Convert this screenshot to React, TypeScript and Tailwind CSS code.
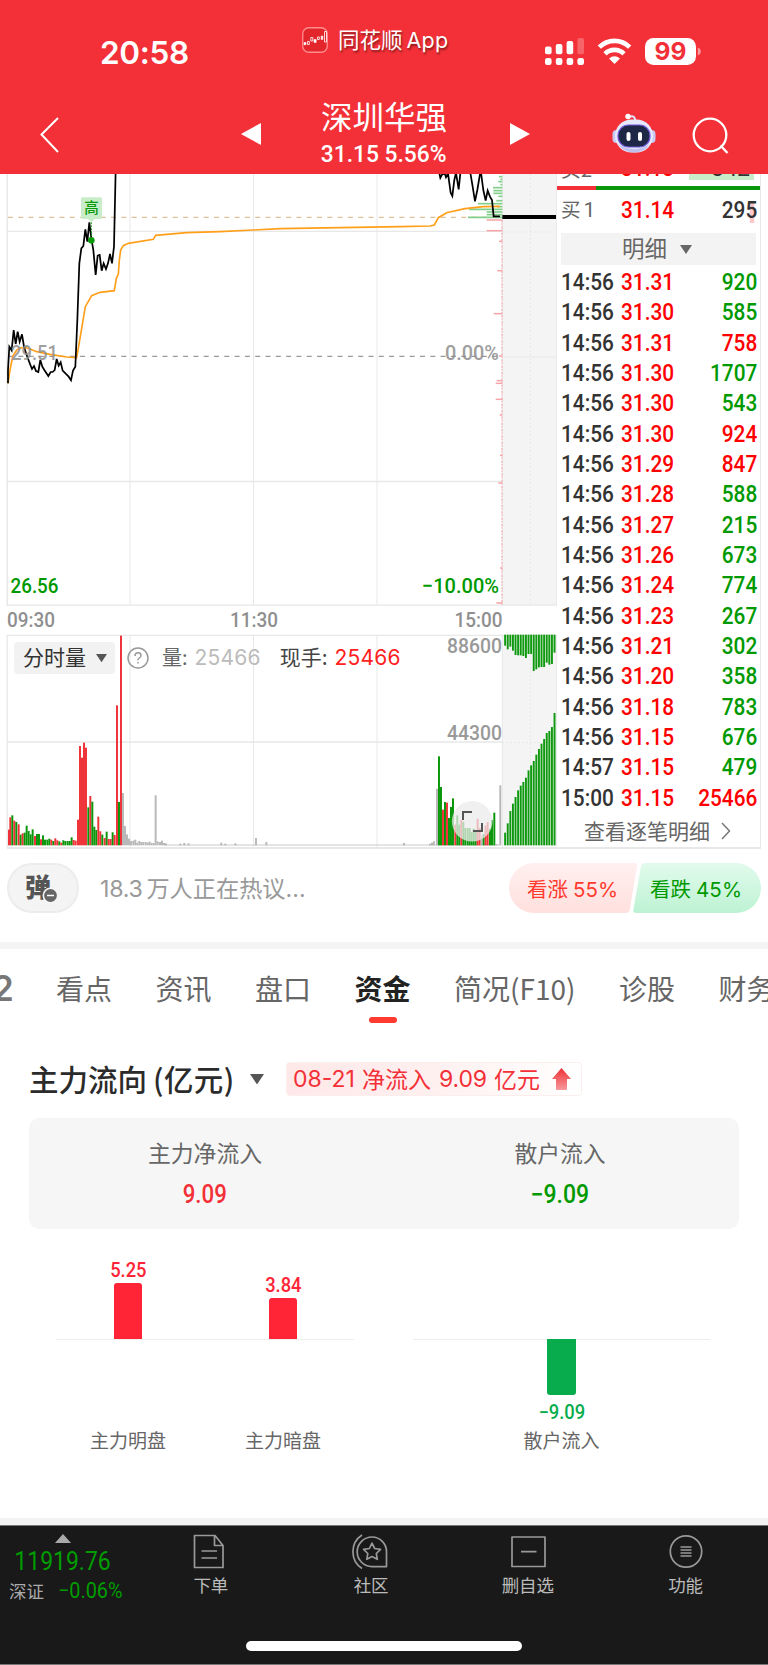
import type { ReactNode } from "react";

type Dir = "up" | "down";
type Bar = [x: number, h: number, color: "r" | "g" | "n"];

const TICKS: [time: string, price: string, vol: string, dir: Dir][] = [
  ["14:56", "31.31", "920", "down"],
  ["14:56", "31.30", "585", "down"],
  ["14:56", "31.31", "758", "up"],
  ["14:56", "31.30", "1707", "down"],
  ["14:56", "31.30", "543", "down"],
  ["14:56", "31.30", "924", "up"],
  ["14:56", "31.29", "847", "up"],
  ["14:56", "31.28", "588", "down"],
  ["14:56", "31.27", "215", "down"],
  ["14:56", "31.26", "673", "down"],
  ["14:56", "31.24", "774", "down"],
  ["14:56", "31.23", "267", "down"],
  ["14:56", "31.21", "302", "down"],
  ["14:56", "31.20", "358", "down"],
  ["14:56", "31.18", "783", "down"],
  ["14:56", "31.15", "676", "down"],
  ["14:57", "31.15", "479", "down"],
  ["15:00", "31.15", "25466", "up"],
];

// Chart data is stored at 3x, the svg groups scale it back down.
const PRICE_OPEN =
  "24,640 24,600 28,530 35,541 41,480 47,522 53,485 59,515 66,493 72,530 78,550 90,582 96,597 102,588 108,603 115,606 121,570 127,590 133,600 145,618 152,606 158,606 164,600 170,567 176,587 182,577 188,602 194,608 206,620 213,631 219,602 226,590 232,450 238,280 244,235 250,228 256,178 262,215 268,157 274,205 280,240 287,315 293,257 299,255 305,302 311,280 318,297 324,280 330,252 336,280 342,230 347,0";
const PRICE_CLOSE =
  "1316,0 1321,24 1326,14 1334,10 1338,22 1344,10 1352,68 1357,78 1363,30 1368,8 1376,58 1382,0 1405,-10 1412,14 1418,50 1425,94 1432,60 1442,0 1450,60 1457,92 1463,62 1470,80 1476,90 1481,139 1500,139";
const AVERAGE =
  "24,640 30,600 38,560 50,540 60,534 75,532 90,537 110,545 150,553 200,561 230,563 240,505 256,410 275,377 300,367 343,362 349,325 355,312 358,270 362,240 370,227 385,220 460,208 467,196 500,193 560,188 660,185 760,180 840,176 1200,170 1290,168 1303,165 1315,143 1340,128 1395,116 1450,110 1500,109";

const ASKS = [[20, 10], [28, 6], [35, 12], [44, 6], [53, 28], [62, 27], [70, 27], [79, 12], [92, 18], [101, 73], [110, 17], [118, 100], [126, 47], [134, 47], [142, 103]];
const BIDS = [[150, 47], [182, 47], [214, 10], [302, 15], [431, 26], [558, 10], [632, 17], [640, 20], [688, 20], [735, 8], [856, 7], [939, 12], [1194, 7], [1299, 18]];

const VOLUME: Bar[] = [
  [27, 47, "r"], [31, 84, "r"], [37, 90, "g"], [43, 74, "r"], [49, 70, "g"], [56, 63, "r"], [62, 32, "g"], [68, 36, "r"],
  [74, 38, "g"], [80, 59, "g"], [86, 43, "g"], [92, 33, "g"], [98, 48, "g"], [105, 28, "r"], [111, 34, "g"], [117, 34, "g"],
  [123, 18, "r"], [129, 30, "g"], [135, 17, "g"], [142, 17, "g"], [148, 20, "g"], [154, 17, "r"], [160, 13, "g"], [166, 21, "r"],
  [172, 15, "r"], [178, 12, "g"], [184, 8, "r"], [190, 15, "g"], [196, 13, "g"], [203, 13, "g"], [209, 13, "g"], [215, 24, "g"],
  [221, 16, "r"], [227, 14, "r"], [234, 77, "r"], [240, 298, "r"], [246, 263, "r"], [252, 308, "r"], [258, 293, "r"], [265, 114, "g"],
  [271, 148, "r"], [277, 131, "g"], [283, 56, "g"], [289, 46, "g"], [295, 86, "r"], [301, 42, "r"], [307, 32, "g"], [314, 22, "r"],
  [320, 41, "g"], [326, 19, "r"], [332, 19, "r"], [338, 39, "g"], [344, 31, "r"], [351, 420, "r"], [357, 130, "g"], [363, 629, "r"],
  [369, 157, "n"], [375, 58, "n"], [381, 33, "n"], [387, 20, "n"], [393, 13, "n"], [400, 14, "n"], [406, 17, "n"], [412, 8, "n"],
  [418, 13, "n"], [424, 10, "n"], [430, 10, "n"], [437, 10, "n"], [443, 9, "n"], [449, 11, "n"], [455, 7, "n"], [461, 7, "n"],
  [467, 150, "n"], [473, 12, "n"], [480, 10, "n"], [486, 14, "n"], [492, 7, "n"], [498, 6, "n"], [541, 5, "n"], [553, 7, "n"],
  [566, 6, "n"], [664, 8, "n"], [676, 5, "n"], [706, 6, "n"], [768, 22, "n"], [799, 10, "n"], [1212, 7, "n"], [1290, 5, "n"],
  [1296, 8, "n"], [1302, 12, "n"], [1311, 170, "n"], [1317, 267, "g"], [1323, 175, "g"], [1329, 107, "r"], [1335, 130, "g"],
  [1341, 128, "r"], [1347, 82, "g"], [1353, 115, "g"], [1359, 141, "g"], [1366, 62, "r"], [1372, 90, "g"], [1378, 62, "g"],
  [1384, 76, "r"], [1390, 70, "g"], [1396, 52, "g"], [1403, 52, "g"], [1409, 52, "g"], [1415, 40, "g"], [1421, 50, "g"],
  [1427, 46, "g"], [1433, 80, "r"], [1439, 52, "r"], [1445, 30, "n"], [1451, 34, "g"], [1457, 60, "r"], [1463, 70, "r"],
  [1470, 50, "g"], [1476, 76, "g"], [1483, 98, "g"], [1489, 4, "n"], [1501, 180, "n"],
];
const AUCTION_TOP = [33, 44, 36, 48, 61, 62, 62, 64, 70, 58, 58, 109, 104, 98, 97, 97, 84, 90, 88, 54];
const AUCTION_BOTTOM = [38, 66, 103, 125, 145, 165, 179, 190, 203, 225, 240, 253, 272, 289, 305, 319, 337, 343, 355, 397];

const BAR_FILL = { r: "#ee3237", g: "#0a960a", n: "#b8b8b8" };
const GRID_X = [130, 253.5, 377];

function Triangle({ className = "" }: { className?: string }) {
  return (
    <svg viewBox="0 0 12 9" className={className} fill="currentColor">
      <path d="M0 0h12L6 9z" />
    </svg>
  );
}

/** Chart label stretched to an exact width. */
function Label({ x, y, w, fill, children }: { x: number; y: number; w: number; fill: string; children: ReactNode }) {
  return (
    <text x={x} y={y} textLength={w} lengthAdjust="spacingAndGlyphs" fill={fill} fontSize="21" fontWeight="500" fontFamily="Roboto, sans-serif">
      {children}
    </text>
  );
}

function StatusBar() {
  return (
    <div className="flex h-[92px] items-start text-white">
      <div className="w-[302px] pt-[32px] pl-[100px] font-['Inter'] text-[31.500px] leading-[42px] font-semibold tracking-[-0.3px]">20:58</div>
      <div className="flex w-[243px] items-start gap-[10px] pt-[27px]">
        <svg width="26" height="26" viewBox="0 0 26 26" fill="none" stroke="#fff">
          <rect x="0.75" y="0.75" width="24.5" height="24.5" rx="6" fill="#e3262c" stroke="#ff8d90" strokeWidth="1.3" />
          <path d="M5.500 14.500h1.800v3H5.500zM8.800 10.500h2v3.500h-2zM15.500 10h1.800v2.500h-1.800zM22.500 4.500h2v10.500h-2z" strokeWidth="0.8" />
          <path d="M2 15.500h2v2.200H2zM12 12.500h2.200v3H12zM19.200 9h1.600v3.500h-1.600z" fill="#fff" strokeWidth="0.5" />
        </svg>
        <span className="-mt-[1px] text-[21.500px] leading-[26px] whitespace-nowrap [text-shadow:1px_2px_2px_rgba(0,0,0,0.45)]">
          同花顺<span className="ml-1 font-['Inter'] tracking-[0.2px]">App</span>
        </span>
      </div>
      <svg width="157" height="28" viewBox="0 0 157 28" className="mt-[38px]" fill="#fff">
        {[8.5, 6, 3, 0].map((top, i) => (
          <g key={top}>
            <rect x={i * 10.8} y={top} width="6.6" height={16.300 - top} rx="2" opacity={i === 3 ? 0.25 : 1} />
            <rect x={i * 10.8} y="20" width="6.600" height="7" rx="2.200" />
          </g>
        ))}
        <g fill="none" stroke="#fff" strokeWidth="4.600">
          <path d="M54.300 9.200a21.500 21.500 0 0 1 30.400 0" />
          <path d="M60 15.800a13.500 13.500 0 0 1 19 0" />
        </g>
        <path d="M64 20.500q5.500-4.600 11 0l-5.500 5.600z" />
        <rect x="100" width="51" height="27" rx="8.500" />
        <path d="M152.800 9.500q3 1.200 3 4t-3 4z" opacity="0.5" />
        <text x="125.500" y="22" textAnchor="middle" fill="#f33037" fontSize="24.500" fontWeight="700" fontFamily="Inter">99</text>
      </svg>
    </div>
  );
}

function Robot() {
  return (
    <svg width="44" height="42" viewBox="0 0 44 42" className="-mt-[2px]">
      <path d="M17 5q6-3 6.500 5" fill="none" stroke="#dfe4ff" strokeWidth="2" />
      <circle cx="16" cy="4.500" r="2.700" fill="#fff" />
      <rect x="0.500" y="18" width="8" height="13" rx="4" fill="#c9caf3" />
      <rect x="35.500" y="18" width="8" height="13" rx="4" fill="#c9caf3" />
      <rect x="3" y="7.500" width="38" height="33" rx="16.500" fill="#e6e8fb" />
      <path d="M6 32q6 8.500 16 8.500T38 32q-7 5-16 5T6 32z" fill="#bfc0ec" />
      <rect x="6" y="13" width="32" height="22" rx="10.500" fill="#1f2747" stroke="#6f58d8" strokeWidth="1.200" />
      <rect x="14.500" y="20" width="4" height="9" rx="2" fill="#fff" />
      <rect x="26" y="20" width="4" height="9" rx="2" fill="#fff" />
    </svg>
  );
}

function Header() {
  return (
    <header className="h-[174px] bg-[#f33037] text-white">
      <StatusBar />
      <div className="flex h-[82px] items-start">
        <div className="w-[241px] pt-[24px] pl-[39px]">
          <svg width="22" height="38" viewBox="0 0 22 38" fill="none" stroke="#fff" strokeWidth="2">
            <path d="M19 2L2.500 18.500 19 36" />
          </svg>
        </div>
        <svg width="20" height="22" viewBox="0 0 20 22" className="mt-[31px]" fill="#fff"><path d="M20 0v22L0 11z" /></svg>
        <div className="flex w-[249px] flex-col items-center pt-[5px] pr-[3px]">
          <span className="text-[31.500px] leading-[36px]">深圳华强</span>
          <span className="mt-[6px] origin-center scale-x-[0.93] font-['Roboto'] text-[24.500px] leading-[30px] font-medium whitespace-nowrap">31.15 5.56%</span>
        </div>
        <svg width="20" height="22" viewBox="0 0 20 22" className="mt-[31px]" fill="#fff"><path d="M0 0v22l20-11z" /></svg>
        <div className="flex w-[238px] items-center gap-[36px] pt-[21px] pl-[82px]">
          <Robot />
          <svg width="38" height="38" viewBox="0 0 38 38" className="mt-[4px]" fill="none" stroke="#fff" strokeWidth="2.300">
            <circle cx="18" cy="18" r="16.300" />
            <path d="M28.500 28.500L35.500 36" />
          </svg>
        </div>
      </div>
    </header>
  );
}

function PriceChart() {
  return (
    <svg width="557" height="432" viewBox="0 174 557 432" className="block">
      <rect x="502" y="174" width="55" height="431" fill="#f4f4f4" />
      <g stroke="#e8e8e8" strokeWidth="1">
        <path d="M7.200 174V606" strokeWidth="1.500" />
        {GRID_X.map((x) => (
          <path key={x} d={`M${x} 174V605`} />
        ))}
        <path d="M7 231.300H502M7 481.500H502M7 605.200H557" strokeWidth="1.300" />
        <path d="M502 357H556M502.300 174V606M556.700 174V606" />
        <path d="M530.500 174V605M502 232H556" strokeDasharray="2 2" />
      </g>
      <path d="M8 217.300H502" stroke="#dcc09a" strokeDasharray="5 5.300" strokeWidth="1.200" />
      <path d="M8 356.300H502" stroke="#999" strokeDasharray="5 5.300" strokeWidth="1.200" />
      <g transform="translate(0 170) scale(0.33333)" fill="none">
        <g stroke="#82cf8a" strokeWidth="5">
          {ASKS.map(([y, w]) => (
            <path key={y} d={`M1507 ${y}h${-w}`} />
          ))}
        </g>
        <g stroke="#f7a3a8" strokeWidth="4.500">
          <path d="M1506 150V1305" strokeWidth="3" strokeDasharray="7 3 4 5" />
          {BIDS.map(([y, w]) => (
            <path key={y} d={`M1507 ${y}h${-w}`} />
          ))}
        </g>
        <polyline points={AVERAGE} stroke="#ff9f1a" strokeWidth="5" />
        <polyline points={PRICE_OPEN} stroke="#000" strokeWidth="5.200" />
        <polyline points={PRICE_CLOSE} stroke="#000" strokeWidth="5.200" />
        <path d="M1507 141H1668" stroke="#000" strokeWidth="12" />
        <path d="M247 82h55q4 0 4 4v57q0 4-4 4h-18l-10 10-10-10h-17q-4 0-4-4V86q0-4 4-4z" fill="#c9edc9" />
        <path d="M274 157V205" stroke="#0a9a0a" strokeWidth="3" strokeDasharray="5 4" />
        <circle cx="274" cy="211" r="10" fill="#0a9a0a" />
      </g>
      <text x="91.500" y="212.500" textAnchor="middle" fill="#0a9a0a" fontSize="14.500" fontWeight="500">高</text>
      <g opacity="0.85">
        <Label x={11} y={360} w={47} fill="#8f8f8f">29.51</Label>
        <Label x={445} y={360} w={54} fill="#8f8f8f">0.00%</Label>
      </g>
      <Label x={10.500} y={592.700} w={48} fill="#009900">26.56</Label>
      <Label x={422} y={592.700} w={77} fill="#009900">−10.00%</Label>
    </svg>
  );
}

function VolumeChart() {
  return (
    <div className="relative">
      <svg width="557" height="215" viewBox="0 634 557 215" className="block">
        <rect x="502" y="635" width="55" height="211" fill="#f4f4f4" />
        <g stroke="#e8e8e8" strokeWidth="1">
          <path d="M7.200 635V848M7 635.300H557M7 742H502" strokeWidth="1.300" />
          <path d="M7 848H557" strokeWidth="1.800" />
          {GRID_X.map((x) => (
            <path key={x} d={`M${x} 635V847`} />
          ))}
          <path d="M502.300 635V847M556.700 635V848" />
          <path d="M530.500 635V847M502 742.500H556" strokeDasharray="2 2" />
        </g>
        <path d="M164 845H500" stroke="#c4c4c4" strokeWidth="0.900" />
        <g transform="translate(0 560) scale(0.33333)">
          {VOLUME.map(([x, h, c]) => (
            <rect key={x} x={x - 3} y={856 - h} width="5.900" height={h} fill={BAR_FILL[c]} />
          ))}
          {AUCTION_TOP.map((h, i) => (
            <rect key={i} x={1512.500 + i * 7.800} y="224" width="5.800" height={h} fill="#0f990f" />
          ))}
          {AUCTION_BOTTOM.map((h, i) => (
            <rect key={i} x={1512.500 + i * 7.800} y={856 - h} width="5.800" height={h} fill="#0f990f" />
          ))}
        </g>
        <Label x={447} y={652.700} w={55} fill="#999">88600</Label>
        <Label x={447} y={740} w={55} fill="#999">44300</Label>
        <circle cx="472.200" cy="821.300" r="20.300" fill="#ebebeb" fillOpacity="0.75" />
        <path d="M463 820v-8h9M482 823v8h-9" fill="none" stroke="#555" strokeWidth="2" />
      </svg>
      <div className="absolute top-[8px] left-[14px] flex h-8 items-center text-[21px] whitespace-nowrap">
        <div className="flex h-8 w-[101px] items-center gap-[10px] rounded bg-[#f2f2f2] pl-[9px] text-[#333]">
          <span className="-mt-[2px]">分时量</span>
          <Triangle className="w-[11px] text-[#555]" />
        </div>
        <svg width="22" height="22" viewBox="0 0 22 22" className="ml-[12px]" fill="none" stroke="#999" strokeWidth="1.500">
          <circle cx="11" cy="11" r="10" />
          <path d="M8 9q0-3.200 3-3.200t3 2.700q0 1.300-1.700 2.500T11 13.500M11 15v1.600" />
        </svg>
        <span className="-mt-[2px] ml-[13px] text-[20px] text-[#666]">量:</span>
        <span className="ml-[7px] font-['Inter'] text-[21px] tracking-[0.2px] text-[#bbb]">25466</span>
        <span className="-mt-[2px] ml-[19px] text-[#444]">现手:</span>
        <span className="ml-[7px] font-['Inter'] text-[21px] tracking-[0.2px] text-[#ff2020]">25466</span>
      </div>
    </div>
  );
}

function TickPanel() {
  const num = "font-['Roboto'] text-[23px] font-medium scale-x-[0.905]";
  return (
    <div className="flex h-[675px] w-[204px] flex-col overflow-hidden border-r border-b-2 border-[#e8e8e8] font-normal">
      <div className="flex h-[12px] shrink-0 items-end overflow-hidden">
        <div className="flex h-[30px] w-full shrink-0 items-center pb-[5px] pl-1 text-[20px] leading-[20px] text-[#666]">
          <span className="w-[60px]">买2</span>
          <span className={`${num} origin-left text-[#f00]`}>31.13</span>
          <span className="mr-[6px] ml-auto h-[22px] w-[65px] bg-[#c9edc9] pr-1 text-right font-['Roboto'] text-[23px] leading-[22px] text-[#333]">342</span>
        </div>
      </div>
      <div className="flex h-[4px] shrink-0">
        <div className="w-[39px] bg-[#f33037]" />
        <div className="grow bg-[#0a960a]" />
      </div>
      <div className="flex h-[43px] shrink-0 items-center pr-[3px] pl-[4px]">
        <span className="-mt-[2px] w-[60px] text-[19.500px] text-[#666]">买<span className="ml-[3px] font-['Roboto'] text-[21px]">1</span></span>
        <span className={`${num} origin-left text-[#f00]`}>31.14</span>
        <span className={`${num} ml-auto origin-right bg-[linear-gradient(#ffc9cc,#ffc9cc)] bg-[length:5px_22px] bg-[position:right_3px_center] bg-no-repeat text-[#333]`}>295</span>
      </div>
      <div className="mr-[4px] ml-[4px] flex h-[32px] shrink-0 items-center justify-center gap-[13px] bg-[#f3f3f3] pr-[3px] text-[22.500px] text-[#666]">
        <span className="-mt-[2px]">明细</span>
        <Triangle className="w-[12px]" />
      </div>
      <div className="mt-[3px] flex shrink-0 flex-col">
        {TICKS.map(([time, price, vol, dir], i) => (
          <div key={i} className="flex h-[30.350px] items-center pr-[3px] pl-[4px]">
            <span className={`${num} w-[60px] origin-left text-[#333]`}>{time}</span>
            <span className={`${num} origin-left text-[#f00]`}>{price}</span>
            <span className={`${num} ml-auto origin-right ${dir === "up" ? "text-[#f00]" : "text-[#009900]"}`}>{vol}</span>
          </div>
        ))}
      </div>
      <div className="flex grow items-center gap-[11px] pl-[27px] text-[21px] whitespace-nowrap text-[#666]">
        查看逐笔明细
        <svg width="10" height="18" viewBox="0 0 10 18" fill="none" stroke="#777" strokeWidth="1.500">
          <path d="M1 1l7.500 8L1 17" />
        </svg>
      </div>
    </div>
  );
}

function Quote() {
  return (
    <section className="flex">
      <div className="w-[557px] shrink-0">
        <PriceChart />
        <svg width="557" height="28" viewBox="0 606 557 28" className="block">
          <Label x={7} y={627} w={48} fill="#8f8f8f">09:30</Label>
          <Label x={230} y={627} w={48} fill="#8f8f8f">11:30</Label>
          <Label x={454.500} y={627} w={48} fill="#8f8f8f">15:00</Label>
        </svg>
        <VolumeChart />
      </div>
      <TickPanel />
    </section>
  );
}

function Discussion() {
  return (
    <section className="flex h-[93px] items-start pt-[14px] pl-[7px]">
      <div className="relative h-[50px] w-[72px] rounded-full border-2 border-[#ececec] bg-[#f4f4f4]">
        <span className="absolute top-[6px] left-[16px] text-[26px] leading-[30px] font-black text-[#555]">弹</span>
        <svg width="17" height="17" viewBox="0 0 17 17" className="absolute top-[22px] left-[33px]">
          <circle cx="8.500" cy="8.500" r="7.200" fill="#666" stroke="#f4f4f4" strokeWidth="1.600" />
          <path d="M5 8.500h7" stroke="#fff" strokeWidth="1.500" />
        </svg>
      </div>
      <span className="ml-[21px] w-[409px] text-[23.200px] leading-[48px] text-[#999]">
        <span className="mr-1 font-['Inter'] tracking-[-0.3px]">18.3</span>万人正在热议<span className="font-['Inter']">...</span>
      </span>
      <div className="relative flex h-[50px] w-[252px] text-[20.500px] whitespace-nowrap">
        <svg width="252" height="50" viewBox="0 0 252 50" className="absolute inset-0">
          <defs>
            <linearGradient id="bull" x2="0" y2="1">
              <stop stopColor="#fff0ef" />
              <stop offset="1" stopColor="#ffe0de" />
            </linearGradient>
            <linearGradient id="bear" x2="0" y2="1">
              <stop stopColor="#e2fbec" />
              <stop offset="1" stopColor="#bdf2d3" />
            </linearGradient>
          </defs>
          <path d="M25 0H125.500q3 0 2.500 3L120.800 46.500q-.6 3.500-4 3.500H25a25 25 0 0 1 0-50z" fill="url(#bull)" />
          <path d="M227 0H136q-3.500 0-4 3.500L124.300 47q-.4 3 2.500 3H227a25 25 0 0 0 0-50z" fill="url(#bear)" />
        </svg>
        <span className="relative w-[122px] pl-[18px] leading-[50px] text-[#ff3b30]">看涨<span className="ml-[5px] font-['Inter'] tracking-[0.1px]">55%</span></span>
        <span className="relative pl-[19px] leading-[50px] text-[#009900]">看跌<span className="ml-[5px] font-['Inter'] tracking-[0.1px]">45%</span></span>
      </div>
    </section>
  );
}

function Tabs() {
  const rest = ["看点", "资讯", "盘口", "资金", "简况(F10)", "诊股", "财务"];
  return (
    <nav className="flex h-[90px] gap-[43.500px] overflow-hidden pt-[19px] text-[28px] leading-[40px] whitespace-nowrap text-[#666]">
      <span className="-ml-[8px] w-[20.500px] shrink-0 font-['Inter'] text-[35px] font-semibold text-[#777]">2</span>
      {rest.map((tab) =>
        tab === "资金" ? (
          <div key={tab} className="flex shrink-0 flex-col items-center font-bold text-[#222]">
            {tab}
            <div className="mt-[9px] h-[6px] w-[28px] rounded-sm bg-[#ff3b30]" />
          </div>
        ) : (
          <span key={tab} className="shrink-0">{tab}</span>
        ),
      )}
    </nav>
  );
}

function FlowBar({ value, height, name }: { value: string; height: number; name: string }) {
  const negative = value.startsWith("−");
  return (
    <div className="flex w-[155px] flex-col items-center">
      <div className="flex h-[110px] flex-col items-center justify-end">
        {!negative && (
          <>
            <span className="-mb-[1px] scale-x-[0.94] font-['Roboto'] text-[19.500px] leading-[26px] font-medium text-[#ff2436]">{value}</span>
            <div className="w-[28.500px] rounded-t-[3px] bg-[#ff2436]" style={{ height }} />
          </>
        )}
      </div>
      <div className="flex h-[87px] flex-col items-center">
        {negative && (
          <>
            <div className="w-[28.500px] rounded-b-[3px] bg-[#08ac4c]" style={{ height }} />
            <span className="mt-[5px] scale-x-[0.94] font-['Roboto'] text-[19.500px] leading-[26px] font-medium text-[#08ac4c]">{value}</span>
          </>
        )}
      </div>
      <span className="text-[19px] leading-[28px] text-[#666]">{name}</span>
    </div>
  );
}

function CapitalFlow() {
  return (
    <section className="px-[29px] pt-[23px]">
      <div className="flex h-[34px] items-center">
        <h2 className="-mt-[2px] w-[206px] text-[29.500px] leading-[34px] font-medium whitespace-nowrap text-[#2b2b2b]">
          主力流向<span className="ml-[6px] tracking-[0.4px]">(亿元)</span>
        </h2>
        <Triangle className="ml-[15px] w-[14px] text-[#555]" />
        <div className="ml-[22px] flex h-[34px] w-[296px] items-center rounded border border-[#fdeeee] bg-linear-to-r from-[#ffe8e8] via-[#fff0f0] to-white pl-[6px] text-[23px] whitespace-nowrap text-[#f33037]">
          <span className="font-['Inter'] tracking-[0px]">08-21</span>
          <span className="-mt-[2px] ml-[7px]">净流入</span>
          <span className="ml-[8px] font-['Inter'] tracking-[-0.1px]">9.09</span>
          <span className="-mt-[2px] ml-[7px]">亿元</span>
          <svg width="19" height="22" viewBox="0 0 19 22" className="ml-[12px]">
            <linearGradient id="arrow" x2="0" y2="1">
              <stop stopColor="#ee2f35" />
              <stop offset="1" stopColor="#f79a9d" />
            </linearGradient>
            <path d="M9.500 0L19 11h-4v10q0 1-1 1H5q-1 0-1-1V11H0z" fill="url(#arrow)" />
          </svg>
        </div>
      </div>

      <div className="mt-[22px] flex h-[111px] rounded-[10px] bg-[#f6f6f6] pt-[19px]">
        <div className="flex w-[353px] flex-col items-center">
          <span className="text-[22.800px] leading-[32px] text-[#666]">主力净流入</span>
          <span className="mt-[10px] scale-x-[0.89] font-['Roboto'] text-[25px] leading-[32px] font-medium text-[#f33037]">9.09</span>
        </div>
        <div className="flex w-[359px] flex-col items-center">
          <span className="text-[22.800px] leading-[32px] text-[#666]">散户流入</span>
          <span className="mt-[10px] scale-x-[0.92] font-['Roboto'] text-[25px] leading-[32px] font-medium text-[#009900]">−9.09</span>
        </div>
      </div>

      <div className="flex justify-between pr-[29px] pl-[27px]">
        <div className="flex w-[298px] bg-[linear-gradient(#eee,#eee)] bg-[length:100%_1px] bg-[position:0_110px] bg-no-repeat">
          <div className="-ml-[5.500px] flex">
            <FlowBar value="5.25" height={56.500} name="主力明盘" />
            <FlowBar value="3.84" height={41.500} name="主力暗盘" />
          </div>
        </div>
        <div className="flex w-[297px] justify-center bg-[linear-gradient(#eee,#eee)] bg-[length:100%_1px] bg-[position:0_110px] bg-no-repeat">
          <FlowBar value="−9.09" height={56.500} name="散户流入" />
        </div>
      </div>
    </section>
  );
}

function NavItem({ label, className, children }: { label: string; className: string; children: ReactNode }) {
  return (
    <div className={`flex flex-col items-center ${className}`}>
      <svg width="38" height="38" viewBox="0 0 38 38" fill="none" stroke="#999" strokeWidth="1.700" strokeLinejoin="round">
        {children}
      </svg>
      <span className="mt-[2px] text-[17.500px] leading-[24px] whitespace-nowrap text-[#bbb]">{label}</span>
    </div>
  );
}

function BottomNav() {
  return (
    <footer className="flex h-[140px] flex-col items-center border-t border-b border-[#777] bg-[#191919]">
      <div className="flex w-full pt-[7px]">
        <div className="flex w-[132px] flex-col items-center pr-[6px]">
          <svg width="16" height="9" viewBox="0 0 16 9" className="mt-[1px]" fill="#aaa"><path d="M8 0l8 9H0z" /></svg>
          <span className="mt-[3px] scale-x-[0.9] font-['Roboto'] text-[25.500px] leading-[30px] text-[#009d00]">11919.76</span>
          <div className="mt-[3px] flex w-full items-center pl-[9px] text-[17.500px] leading-[24px] whitespace-nowrap text-[#aaa]">
            深证
            <span className="ml-[14px] origin-left scale-x-[0.9] font-['Roboto'] text-[22px] leading-[24px] text-[#009d00]">−0.06%</span>
          </div>
        </div>
        <NavItem label="下单" className="w-[158px]">
          <path d="M2.500 2.500H23L31 12.500V34.500H2.500zM22.500 2.500V12.500H31M9.500 18h15.500M9.500 25h15.500" />
        </NavItem>
        <NavItem label="社区" className="w-[163px]">
          <path d="M20 4a14.800 14.800 0 1 0 0 29.600h14.500V18.700a14.600 14.600 0 0 0-14.500-14.700zM10 2a20 20 0 0 0 0 33.500" />
          <path d="M20 10.200l2.700 5.300 5.800.9-4.200 4.100 1 5.800-5.300-2.700-5.200 2.700 1-5.800-4.200-4.100 5.800-.9z" />
        </NavItem>
        <NavItem label="删自选" className="w-[151px]">
          <path d="M3 4H36V33.500H3zM12 18.700h15.500" />
        </NavItem>
        <NavItem label="功能" className="w-[165px]">
          <circle cx="19" cy="18.500" r="15.700" />
          <path d="M13.500 14h11M13.500 17h11M13.500 20h11M13.500 23h11" strokeWidth="1.500" />
        </NavItem>
      </div>
      <div className="mt-auto mb-[13px] h-[10px] w-[276px] rounded-full bg-white" />
    </footer>
  );
}

export default function App() {
  return (
    <div className="flex h-[1665px] w-[768px] flex-col overflow-hidden bg-white font-['Noto_Sans_CJK_SC',sans-serif]">
      <Header />
      <Quote />
      <Discussion />
      <div className="h-[7px] shrink-0 bg-[#f4f4f4]" />
      <Tabs />
      <CapitalFlow />
      <div className="mt-auto h-[7px] shrink-0 bg-[#f3f3f3]" />
      <BottomNav />
    </div>
  );
}
